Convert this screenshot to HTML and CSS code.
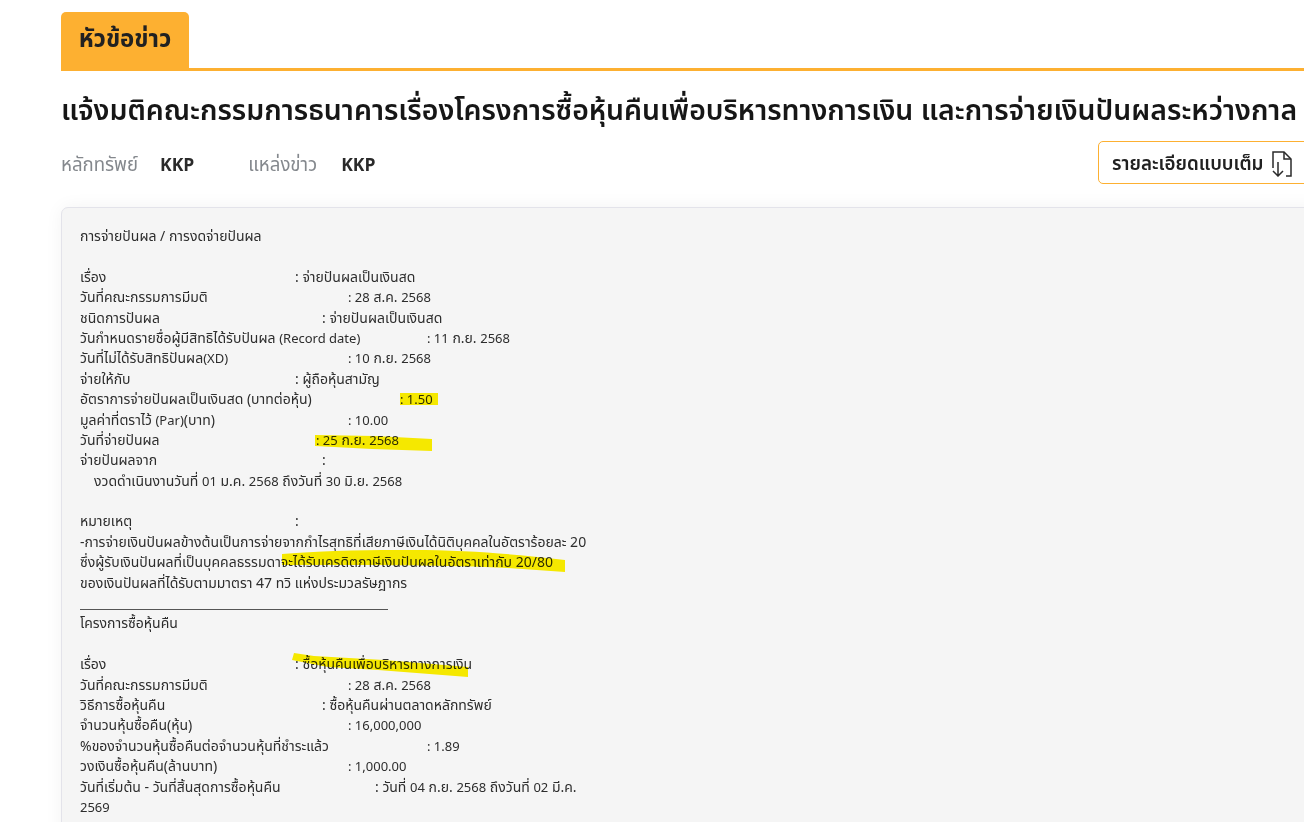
FILE: index.html
```html
<!DOCTYPE html>
<html lang="th">
<head>
<meta charset="utf-8">
<title>หัวข้อข่าว</title>
<link rel="stylesheet" href="styles.css">
</head>
<body>
<main class="page">
  <div class="tabbar"><h2 class="tab">หัวข้อข่าว</h2></div>
  <h1 class="title">แจ้งมติคณะกรรมการธนาคารเรื่องโครงการซื้อหุ้นคืนเพื่อบริหารทางการเงิน และการจ่ายเงินปันผลระหว่างกาล</h1>
  <div class="meta">
    <span class="meta-label">หลักทรัพย์</span><span class="meta-value first">KKP</span>
    <span class="meta-label">แหล่งข่าว</span><span class="meta-value last">KKP</span>
    <a class="full-btn" href="#">รายละเอียดแบบเต็ม
      <svg class="doc-icon" viewBox="0 0 20 26" width="20" height="26" fill="none" stroke="#2b2b2b" stroke-width="1.5">
        <path d="M1 17V1h11l7 7v17h-5"/><path d="M12 1v7h7"/><path d="M6 11v14M1 20l5 5 5-5"/>
      </svg>
    </a>
  </div>
  <section class="panel">
    <svg class="marks" viewBox="0 0 600 620" width="600" height="620">
      <path d="M338 185h38v12h-38z"/>
      <path d="M253 227l60 1 57 3 0 12-60-2-57-3z"/>
      <path d="M220 346c50-4 90-4 130-4 60 0 110 5 153 10l0 12-57-4c-60-3-130-3-226-3z"/>
      <path d="M232 445l20 3 70 4 84 7 0 10-90-7-50-3-36-7z"/>
    </svg>
    <div class="line">การจ่ายปันผล / การงดจ่ายปันผล</div>
    <div class="line blank"></div>
    <div class="row"><span class="k k295">เรื่อง</span><span>: จ่ายปันผลเป็นเงินสด</span></div>
    <div class="row"><span class="k k348">วันที่คณะกรรมการมีมติ</span><span><b>: 28</b> ส.ค. <b>2568</b></span></div>
    <div class="row"><span class="k k322">ชนิดการปันผล</span><span>: จ่ายปันผลเป็นเงินสด</span></div>
    <div class="row"><span class="k k427">วันกำหนดรายชื่อผู้มีสิทธิได้รับปันผล <b>(Record date)</b></span><span><b>: 11</b> ก.ย. <b>2568</b></span></div>
    <div class="row"><span class="k k348">วันที่ไม่ได้รับสิทธิปันผล<b>(XD)</b></span><span><b>: 10</b> ก.ย. <b>2568</b></span></div>
    <div class="row"><span class="k k295">จ่ายให้กับ</span><span>: ผู้ถือหุ้นสามัญ</span></div>
    <div class="row"><span class="k k401">อัตราการจ่ายปันผลเป็นเงินสด (บาทต่อหุ้น)</span><span><b>: 1.50</b></span></div>
    <div class="row"><span class="k k348">มูลค่าที่ตราไว้ <b>(Par)</b>(บาท)</span><span><b>: 10.00</b></span></div>
    <div class="row"><span class="k k316">วันที่จ่ายปันผล</span><span><b>: 25</b> ก.ย. <b>2568</b></span></div>
    <div class="row"><span class="k k322">จ่ายปันผลจาก</span><span>:</span></div>
    <div class="line indent">งวดดำเนินงานวันที่ <b>01</b> ม.ค. <b>2568</b> ถึงวันที่ <b>30</b> มิ.ย. <b>2568</b></div>
    <div class="line blank"></div>
    <div class="row"><span class="k k295">หมายเหตุ</span><span>:</span></div>
    <div class="line">-การจ่ายเงินปันผลข้างต้นเป็นการจ่ายจากกำไรสุทธิที่เสียภาษีเงินได้นิติบุคคลในอัตราร้อยละ 20</div>
    <div class="line">ซึ่งผู้รับเงินปันผลที่เป็นบุคคลธรรมดาจะได้รับเครดิตภาษีเงินปันผลในอัตราเท่ากับ 20/80</div>
    <div class="line">ของเงินปันผลที่ได้รับตามมาตรา 47 ทวิ แห่งประมวลรัษฎากร</div>
    <div class="rule-wrap"><div class="rule"></div></div>
    <div class="line">โครงการซื้อหุ้นคืน</div>
    <div class="line blank"></div>
    <div class="row"><span class="k k295">เรื่อง</span><span>: ซื้อหุ้นคืนเพื่อบริหารทางการเงิน</span></div>
    <div class="row"><span class="k k348">วันที่คณะกรรมการมีมติ</span><span><b>: 28</b> ส.ค. <b>2568</b></span></div>
    <div class="row"><span class="k k322">วิธีการซื้อหุ้นคืน</span><span>: ซื้อหุ้นคืนผ่านตลาดหลักทรัพย์</span></div>
    <div class="row"><span class="k k348">จำนวนหุ้นซื้อคืน(หุ้น)</span><span><b>: 16,000,000</b></span></div>
    <div class="row"><span class="k k427">%ของจำนวนหุ้นซื้อคืนต่อจำนวนหุ้นที่ชำระแล้ว</span><span><b>: 1.89</b></span></div>
    <div class="row"><span class="k k348">วงเงินซื้อหุ้นคืน(ล้านบาท)</span><span><b>: 1,000.00</b></span></div>
    <div class="row"><span class="k k375">วันที่เริ่มต้น - วันที่สิ้นสุดการซื้อหุ้นคืน</span><span>: วันที่ <b>04</b> ก.ย. <b>2568</b> ถึงวันที่ <b>02</b> มี.ค.</span></div>
    <div class="line"><b>2569</b></div>
  </section>
</main>
</body>
</html>
```
FILE: styles.css
```css
* { box-sizing: border-box; }
html, body { margin: 0; height: 822px; overflow: hidden; background: #fff; }
body { font-family: "Noto Sans Thai", "Noto Sans", "Open Sans", "Liberation Sans", sans-serif; color: #212121; }
.page { width: 1400px; padding: 12px 0 0 61px; }
.tabbar { border-bottom: 3px solid #fdb031; height: 59px; }
.tab { margin: 0; width: 128px; height: 59px; background: #fdb031; border-radius: 5px 5px 0 0; font-size: 24px; line-height: 57px; font-weight: 700; text-align: center; color: #212121; }
.title { margin: 21px 0 0; font-size: 28.400px; line-height: 40px; font-weight: 600; color: #161616; white-space: nowrap; }
.meta { display: flex; align-items: center; width: 1297px; height: 43px; margin-top: 9px; font-size: 18.600px; }
.meta-label { color: #84888d; margin-right: 22px; padding-top: 5px; }
.meta-value { font-weight: 700; color: #2a2a2a; font-size: 17.500px; padding-top: 5px; }
.meta-value.first { margin-right: 54px; }
.meta-value.last { margin-left: 2px; }
.full-btn { margin-left: auto; display: flex; align-items: center; gap: 8px; width: 260px; height: 43px; padding: 3px 13px 0; border: 1px solid #fdb031; border-radius: 5px; font-size: 18.800px; font-weight: 600; color: #212121; text-decoration: none; white-space: nowrap; }
.panel { position: relative; margin-top: 23px; padding: 19px 0 0 18px; width: 1300px; height: 700px; background: #f5f5f5; border: 1px solid #e3e3ea; border-radius: 7px; box-shadow: 0 0 18px rgba(0,0,0,.05); font-size: 14px; line-height: 20.400px; color: #2d2d2d; }
.panel b { font-weight: 400; font-size: 13px; }
.line, .row { height: 20.400px; white-space: nowrap; }
.row { display: flex; }
.indent { padding-left: 14px; }
.rule-wrap { height: 20.400px; }
.rule { border-bottom: 1px solid #555; width: 308px; height: 16px; }
.k { display: block; flex: none; }
.k295 { width: 215px; }
.k316 { width: 236px; }
.k322 { width: 242px; }
.k348 { width: 268px; }
.k375 { width: 295px; }
.k401 { width: 320px; }
.k427 { width: 347px; }
.marks { position: absolute; left: 0; top: 0; fill: #fff200; mix-blend-mode: multiply; pointer-events: none; }
```
